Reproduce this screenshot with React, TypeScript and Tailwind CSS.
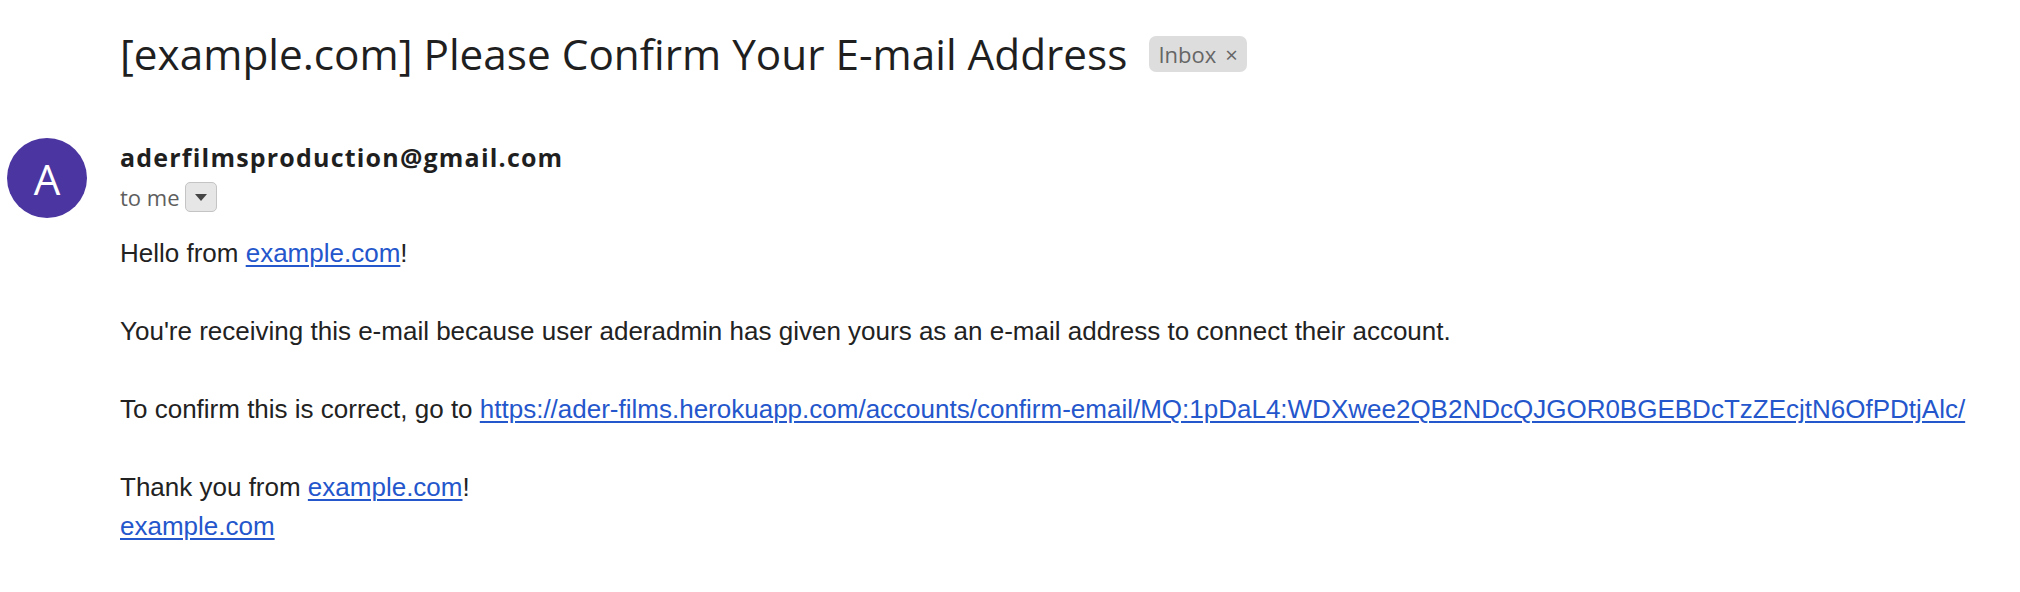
import React from 'react';

const link = 'text-[#2456cc] underline underline-offset-[3px] decoration-[1.5px]';

const App: React.FC = () => {
  return (
    <div className="w-[2020px] h-[592px] bg-white overflow-hidden">
      {/* Subject */}
      <div className="pl-[120px] pt-[30px] flex items-center gap-[22px]">
        <h1 className="text-[42.3px] leading-[48px] text-[#1f1f1f] font-['Open_Sans',sans-serif] font-normal">
          [example.com] Please Confirm Your E-mail Address
        </h1>
        <span className="h-[36px] flex items-center gap-[9px] px-[9px] rounded-[7px] bg-[#dddddd] text-[#666666] text-[22px] font-['Open_Sans',sans-serif]">
          Inbox
          <span className="text-[22px] leading-none">×</span>
        </span>
      </div>

      {/* Message */}
      <div className="flex mt-[60px]">
        <div className="w-[120px] pl-[7px] shrink-0">
          <div className="w-[80px] h-[80px] rounded-full bg-[#4b35a0] flex items-center justify-center text-white text-[42px] font-['Open_Sans',sans-serif]">
            A
          </div>
        </div>

        <div className="flex flex-col">
          <div className="text-[25px] leading-[38px] font-bold tracking-[1.2px] text-[#1f1f1f] font-['Open_Sans',sans-serif]">
            aderfilmsproduction@gmail.com
          </div>
          <div className="h-[42px] flex items-center gap-[5px] text-[22px] text-[#5e5e5e] font-['Open_Sans',sans-serif]">
            to me
            <span className="w-[32px] h-[30px] rounded-[5px] border border-[#c4c4c4] bg-[#e6e6e6] flex items-center justify-center">
              <svg width="14" height="9" viewBox="0 0 14 9">
                <path d="M1 1h12L7 8z" fill="#444" />
              </svg>
            </span>
          </div>

          <div className="mt-[16px] text-[26px] leading-[39px] text-[#222222] font-['Liberation_Sans',Arial,sans-serif]">
            Hello from <a className={link}>example.com</a>!
            <br />
            <br />
            You're receiving this e-mail because user aderadmin has given yours as an e-mail address to connect their account.
            <br />
            <br />
            To confirm this is correct, go to{' '}
            <a className={link}>
              https://ader-films.herokuapp.com/accounts/confirm-email/MQ:1pDaL4:WDXwee2QB2NDcQJGOR0BGEBDcTzZEcjtN6OfPDtjAlc/
            </a>
            <br />
            <br />
            Thank you from <a className={link}>example.com</a>!
            <br />
            <a className={link}>example.com</a>
          </div>
        </div>
      </div>
    </div>
  );
};

export default App;
